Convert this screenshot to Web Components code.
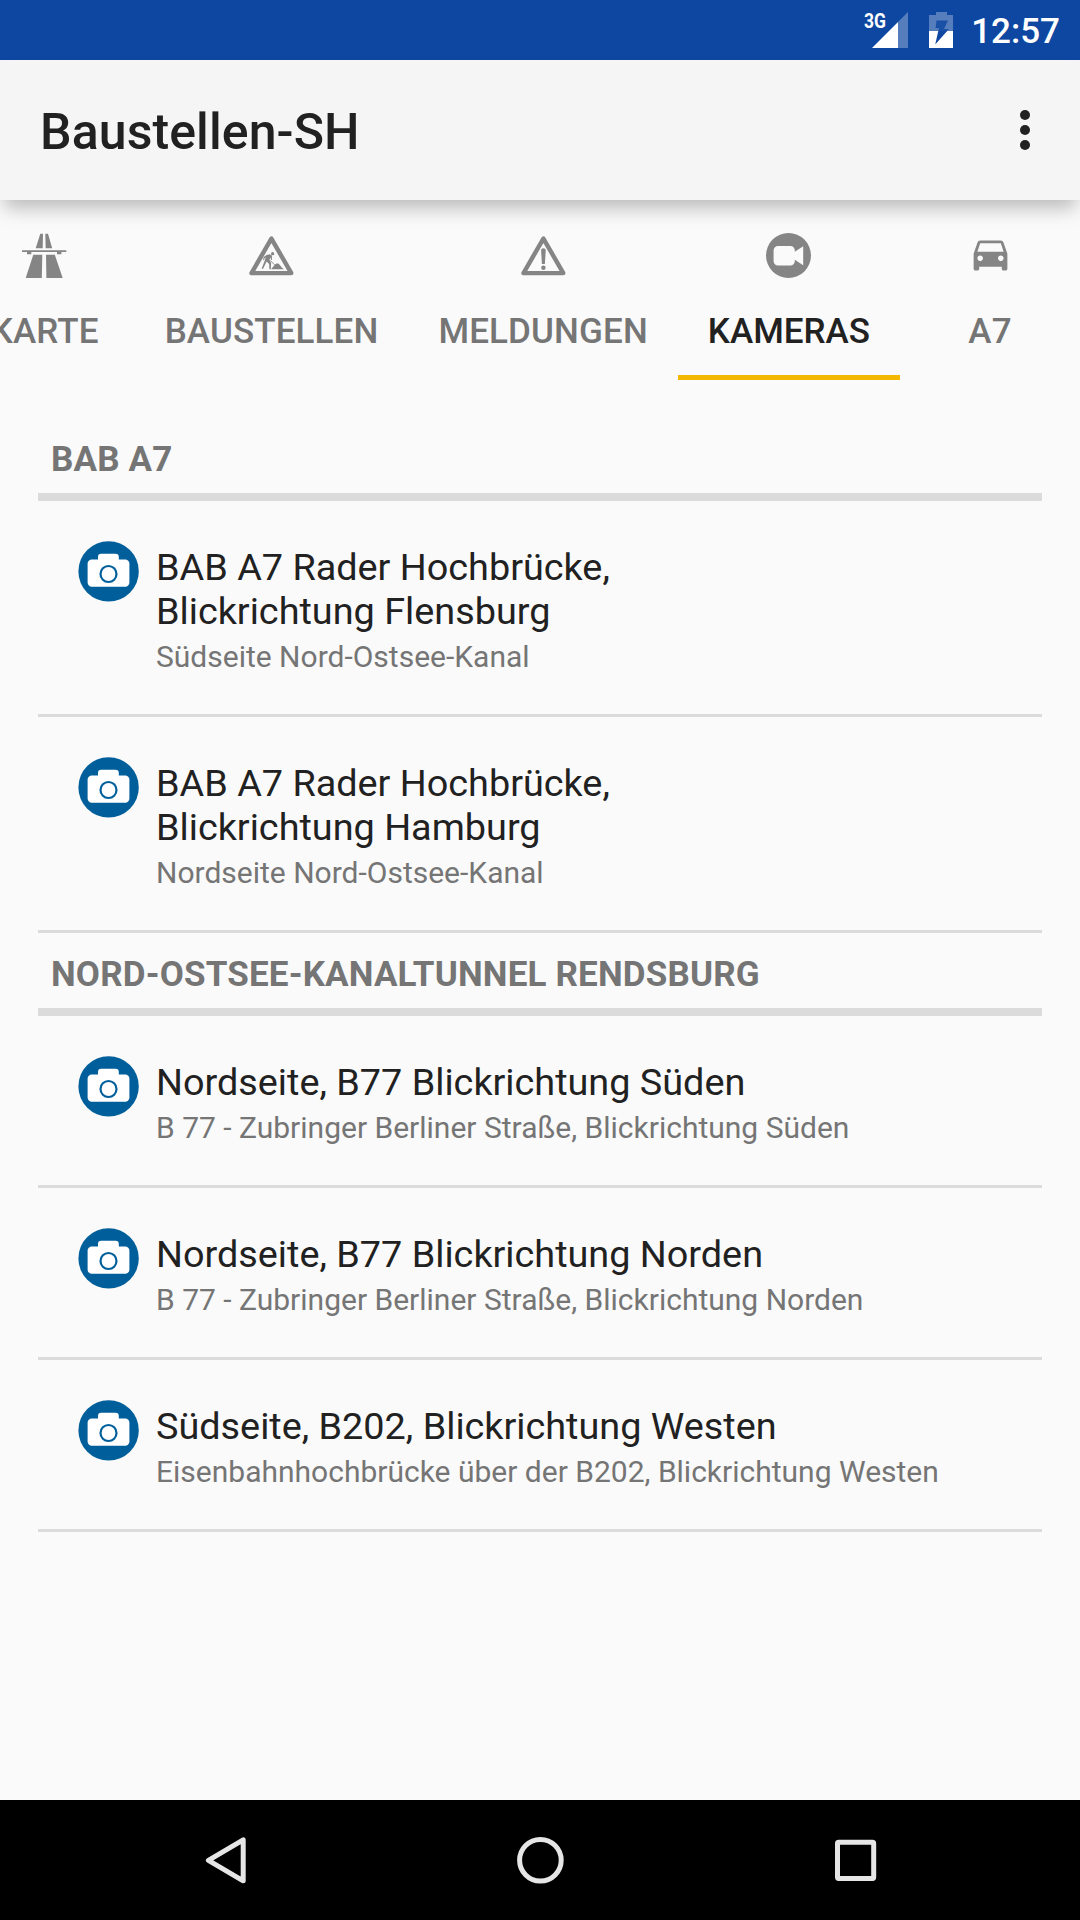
<!DOCTYPE html>
<html lang="de">
<head>
<meta charset="utf-8">
<title>Baustellen-SH</title>
<style>
  html, body { margin: 0; height: 100%; }
  body {
    font-family: Roboto, "Noto Sans", sans-serif;
    color: #212121;
    background: #fafafa;
    overflow: hidden;
  }
</style>
</head>
<body>
<app-screen>
  <status-bar slot="status" time="12:57" network="3G"></status-bar>
  <app-bar slot="bar">Baustellen-SH</app-bar>
  <tab-strip slot="tabs">
    <tab-item icon="autobahn">KARTE</tab-item>
    <tab-item icon="roadworks">BAUSTELLEN</tab-item>
    <tab-item icon="warning">MELDUNGEN</tab-item>
    <tab-item icon="video" selected>KAMERAS</tab-item>
    <tab-item icon="car">A7</tab-item>
  </tab-strip>
  <camera-section heading="BAB A7">
    <camera-row>BAB A7 Rader Hochbrücke,<br>Blickrichtung Flensburg<span slot="place">Südseite Nord-Ostsee-Kanal</span></camera-row>
    <camera-row>BAB A7 Rader Hochbrücke,<br>Blickrichtung Hamburg<span slot="place">Nordseite Nord-Ostsee-Kanal</span></camera-row>
  </camera-section>
  <camera-section heading="NORD-OSTSEE-KANALTUNNEL RENDSBURG">
    <camera-row>Nordseite, B77 Blickrichtung Süden<span slot="place">B 77 - Zubringer Berliner Straße, Blickrichtung Süden</span></camera-row>
    <camera-row>Nordseite, B77 Blickrichtung Norden<span slot="place">B 77 - Zubringer Berliner Straße, Blickrichtung Norden</span></camera-row>
    <camera-row>Südseite, B202, Blickrichtung Westen<span slot="place">Eisenbahnhochbrücke über der B202, Blickrichtung Westen</span></camera-row>
  </camera-section>
  <nav-bar slot="nav"></nav-bar>
</app-screen>

<script>
const ICONS = {
  autobahn: { w: 45, h: 45, body: `
    <path d="M18.3.7H21l-.3 14.6h-7zM23.3.7H26l4.2 14.6h-6.5zM0 17.2h44.3V19H39.4v2.2H35V19H9.3v2.2H5V19H0zM11.3 21.7h9L19.8 45H3.7zM24 21.7h8.8L40.7 45H24.4z"/>` },
  roadworks: { w: 45, h: 45, body: `
    <path d="M22.4 5.6L2.5 40.1h39.8z" fill="none" stroke="currentColor" stroke-width="4.4" stroke-linejoin="round"/>
    <circle cx="23.6" cy="20.7" r="1.6"/>
    <path d="M17.2 22.2l3.2-.9 2.5 1.3.1 4.2-.9.1-.5-2.6-1.1 2.6 1.6 3.2-.3 6.1h-1.4l-.3-5.2-2.5-2.4-3.5 7.1h-1.5l3.4-8.6.6-2.8-1 .7-.5 2.2-1-.2.6-3z"/>
    <path d="M21 27.3l4.6 4.6" stroke="currentColor" stroke-width=".9"/>
    <path d="M22 36.2l4-4.8 1.4-1 1.8.2 1.7 1.4 1.7 2.2 2.2 2z"/>` },
  warning: { w: 45, h: 45, body: `
    <path d="M22.4 5.6L2.5 40.1h39.8z" fill="none" stroke="currentColor" stroke-width="4.4" stroke-linejoin="round"/>
    <path d="M20.1 17.5c0-3 4.6-3 4.6 0L23.9 31h-3z"/>
    <circle cx="22.4" cy="34.8" r="2.2"/>` },
  video: { w: 45, h: 45, body: `
    <path fill-rule="evenodd" d="M22.5 0a22.5 22.5 0 1 0 0 45 22.5 22.5 0 0 0 0-45zM12 12.9h12.4a4.4 4.4 0 0 1 4.4 4.4v1.4l8.4-5.5v19l-8.4-5.5v1.4a4.4 4.4 0 0 1-4.4 4.4H12a4.4 4.4 0 0 1-4.4-4.4V17.3A4.4 4.4 0 0 1 12 12.9z"/>` },
  car: { w: 45, h: 45, box: '0 0 24 24', body: `
    <path d="M18.92 5.01C18.72 4.42 18.16 4 17.5 4h-11c-.66 0-1.21.42-1.42 1.01L3 11v8c0 .55.45 1 1 1h1c.55 0 1-.45 1-1v-1h12v1c0 .55.45 1 1 1h1c.55 0 1-.45 1-1v-8l-2.08-5.99zM6.5 15c-.83 0-1.5-.67-1.5-1.5S5.67 12 6.5 12s1.5.67 1.5 1.5S7.33 15 6.5 15zm11 0c-.83 0-1.5-.67-1.5-1.5s.67-1.5 1.5-1.5 1.5.67 1.5 1.5-.67 1.5-1.5 1.5zM5 10l1.5-4.5h11L19 10H5z"/>` },
  photo: { w: 61, h: 61, body: `
    <circle cx="30.6" cy="30.4" r="30.2" fill="#005f9b"/>
    <path fill="#fff" d="M13.8 18.4h6.2V16a3.2 3.2 0 0 1 3.2-3.2h14.4a3.2 3.2 0 0 1 3.2 3.2v2.4h6.4a4.2 4.2 0 0 1 4.2 4.2v19a4.2 4.2 0 0 1-4.2 4.2H13.8a4.2 4.2 0 0 1-4.2-4.2v-19a4.2 4.2 0 0 1 4.2-4.2z"/>
    <circle cx="30.5" cy="33" r="8" fill="none" stroke="#005f9b" stroke-width="2.2"/>` },
  more: { w: 10, h: 40, body: `
    <circle cx="5" cy="5" r="5"/><circle cx="5" cy="20" r="5"/><circle cx="5" cy="35" r="5"/>` },
  battery: { w: 24, h: 36, body: `
    <path opacity=".3" d="M7 0h11v3h6v16H0V3h7z"/>
    <path d="M0 19h24v17H0z"/>
    <path fill="#1a50a6" d="M7.5 8.5H19L15 17h4.6l-1.4 2H9.3l.6-3H6.6z"/>
    <path fill="#0d47a1" d="M9.3 19h8.9L6.2 32.5z"/>` },
  back: { w: 60, h: 60, body: `
    <path d="M48.2 9.8v41L13.4 30.3z" fill="none" stroke="currentColor" stroke-width="5" stroke-linejoin="round"/>` },
  home: { w: 60, h: 60, body: `
    <circle cx="30.4" cy="30.3" r="20.8" fill="none" stroke="currentColor" stroke-width="5"/>` },
  recents: { w: 60, h: 60, body: `
    <rect x="12.5" y="12.3" width="36.2" height="36.2" rx="1.2" fill="none" stroke="currentColor" stroke-width="5"/>` }
};

class GlyphIcon extends HTMLElement {
  constructor() {
    super();
    this.attachShadow({ mode: 'open' });
  }

  connectedCallback() {
    const icon = ICONS[this.getAttribute('name')];
    this.shadowRoot.innerHTML = `
      <style>
        :host { display: block; flex: none; width: ${icon.w}px; height: ${icon.h}px; }
        svg { display: block; }
      </style>
      <svg width="${icon.w}" height="${icon.h}" viewBox="${icon.box || `0 0 ${icon.w} ${icon.h}`}" fill="currentColor">${icon.body}</svg>
    `;
  }
}

class AppScreen extends HTMLElement {
  constructor() {
    super();
    this.attachShadow({ mode: 'open' }).innerHTML = `
      <style>
        :host { display: flex; flex-direction: column; width: 1080px; height: 1920px; background: #fafafa; }
        main { flex: 1; padding: 38px 38px 0; }
      </style>
      <slot name="status"></slot>
      <slot name="bar"></slot>
      <slot name="tabs"></slot>
      <main><slot></slot></main>
      <slot name="nav"></slot>
    `;
  }
}

class StatusBar extends HTMLElement {
  constructor() {
    super();
    this.attachShadow({ mode: 'open' });
  }

  connectedCallback() {
    this.shadowRoot.innerHTML = `
      <style>
        :host {
          display: flex;
          justify-content: flex-end;
          height: 60px;
          box-sizing: border-box;
          padding: 0 20px 0 0;
          background: #0d47a1;
          color: #fff;
        }
        .signal { margin: 12px 21px 0 0; overflow: visible; }
        glyph-icon { margin: 12px 18px 0 0; }
        time { padding-top: 2px; font-size: 35px; line-height: 60px; height: 58px; font-weight: 500; }
      </style>
      <svg class="signal" width="44" height="36" fill="#fff">
        <path opacity=".3" d="M34 10v26h10V0z"/>
        <path d="M34 10v26H8z"/>
        <text x="0" y="15.8" font-size="21" font-weight="700" textLength="22" lengthAdjust="spacingAndGlyphs">${this.getAttribute('network')}</text>
      </svg>
      <glyph-icon name="battery"></glyph-icon>
      <time>${this.getAttribute('time')}</time>
    `;
  }
}

class AppBar extends HTMLElement {
  constructor() {
    super();
    this.attachShadow({ mode: 'open' }).innerHTML = `
      <style>
        :host {
          display: flex;
          align-items: center;
          justify-content: space-between;
          height: 140px;
          box-sizing: border-box;
          padding: 0 50px 0 40px;
          background: #f5f5f5;
          box-shadow: 0 12px 18px -4px rgba(0,0,0,0.26);
          z-index: 1;
        }
        h1 { margin: 0; padding-top: 3px; font-size: 50px; line-height: 60px; font-weight: 500; letter-spacing: 0.1px; }
      </style>
      <h1><slot></slot></h1>
      <glyph-icon name="more"></glyph-icon>
    `;
  }
}

class TabStrip extends HTMLElement {
  constructor() {
    super();
    // scrolled to its end, so the first tab is cut off at the left
    this.attachShadow({ mode: 'open' }).innerHTML = `
      <style>
        :host { display: flex; justify-content: flex-end; height: 180px; }
      </style>
      <slot></slot>
    `;
  }
}

class TabItem extends HTMLElement {
  constructor() {
    super();
    this.attachShadow({ mode: 'open' });
  }

  connectedCallback() {
    this.shadowRoot.innerHTML = `
      <style>
        :host {
          display: flex;
          flex: none;
          flex-direction: column;
          align-items: center;
          box-sizing: border-box;
          min-width: 180px;
          padding: 33px 30px 0;
          color: #757575;
          border-bottom: 5px solid transparent;
          letter-spacing: 0.12px;
        }
        :host([selected]) { color: #212121; border-bottom-color: #f4b800; letter-spacing: 0; }
        glyph-icon { color: #858585; }
        .label { margin-top: 33px; font-size: 35px; line-height: 41px; font-weight: 500; white-space: nowrap; }
      </style>
      <glyph-icon name="${this.getAttribute('icon')}"></glyph-icon>
      <span class="label"><slot></slot></span>
    `;
  }
}

class CameraSection extends HTMLElement {
  constructor() {
    super();
    this.attachShadow({ mode: 'open' });
  }

  connectedCallback() {
    this.shadowRoot.innerHTML = `
      <style>
        :host { display: block; }
        h2 {
          margin: 0;
          height: 83px;
          box-sizing: border-box;
          padding: 21px 0 0 13px;
          border-bottom: 8px solid #dbdbdb;
          font-size: 35px;
          line-height: 41px;
          font-weight: 700;
          letter-spacing: 0.17px;
          color: #757575;
        }
      </style>
      <h2>${this.getAttribute('heading')}</h2>
      <slot></slot>
    `;
  }
}

class CameraRow extends HTMLElement {
  constructor() {
    super();
    this.attachShadow({ mode: 'open' }).innerHTML = `
      <style>
        :host {
          display: flex;
          align-items: flex-start;
          gap: 17px;
          padding: 40px 0 40px 40px;
          border-bottom: 3px solid #dbdbdb;
        }
        .text { padding-top: 4px; }
        .title { font-size: 37.8px; line-height: 44px; }
        .place { margin-top: 6px; font-size: 30px; line-height: 35px; color: #757575; }
      </style>
      <glyph-icon name="photo"></glyph-icon>
      <div class="text">
        <div class="title"><slot></slot></div>
        <div class="place"><slot name="place"></slot></div>
      </div>
    `;
  }
}

class NavBar extends HTMLElement {
  constructor() {
    super();
    this.attachShadow({ mode: 'open' }).innerHTML = `
      <style>
        :host {
          display: flex;
          justify-content: center;
          align-items: center;
          gap: 255px;
          height: 120px;
          background: #000;
          color: #e6e6e6;
        }
      </style>
      <glyph-icon name="back"></glyph-icon>
      <glyph-icon name="home"></glyph-icon>
      <glyph-icon name="recents"></glyph-icon>
    `;
  }
}

customElements.define('glyph-icon', GlyphIcon);
customElements.define('app-screen', AppScreen);
customElements.define('status-bar', StatusBar);
customElements.define('app-bar', AppBar);
customElements.define('tab-strip', TabStrip);
customElements.define('tab-item', TabItem);
customElements.define('camera-section', CameraSection);
customElements.define('camera-row', CameraRow);
customElements.define('nav-bar', NavBar);
</script>
</body>
</html>
